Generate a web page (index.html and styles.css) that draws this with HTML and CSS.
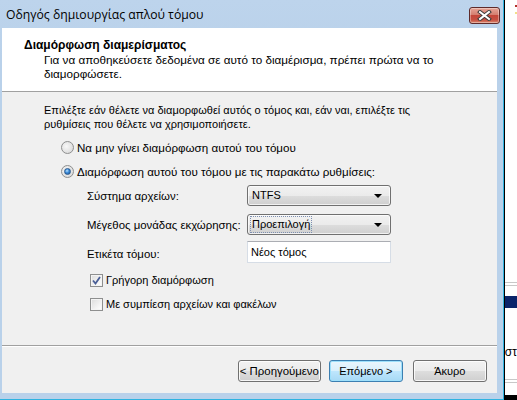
FILE: index.html
```html
<!DOCTYPE html>
<html lang="el">
<head>
<meta charset="utf-8">
<title>Οδηγός δημιουργίας απλού τόμου</title>
<link rel="stylesheet" href="styles.css">
</head>
<body>
<div class="screen">
  <div class="window">
    <div class="titlebar">
      <span class="title">Οδηγός δημιουργίας απλού τόμου</span>
      <button class="close" aria-label="Κλείσιμο">
        <svg width="15" height="11" viewBox="0 0 15 11">
          <path d="M3 2 L12 9 M12 2 L3 9" stroke="#3b3b3b" stroke-width="4" stroke-linecap="square" fill="none"/>
          <path d="M3 2 L12 9 M12 2 L3 9" stroke="#ffffff" stroke-width="2" stroke-linecap="square" fill="none"/>
        </svg>
      </button>
    </div>
    <div class="client">
      <div class="header">
        <div class="h-title">Διαμόρφωση διαμερίσματος</div>
        <div class="h-sub">Για να αποθηκεύσετε δεδομένα σε αυτό το διαμέρισμα, πρέπει πρώτα να το διαμορφώσετε.</div>
      </div>
      <div class="body">
        <p class="intro">Επιλέξτε εάν θέλετε να διαμορφωθεί αυτός ο τόμος και, εάν ναι, επιλέξτε τις ρυθμίσεις που θέλετε να χρησιμοποιήσετε.</p>
        <div class="opt opt-first"><span class="radio"></span><span>Να μην γίνει διαμόρφωση αυτού του τόμου</span></div>
        <div class="opt opt-second"><span class="radio checked"><span class="dot"></span></span><span>Διαμόρφωση αυτού του τόμου με τις παρακάτω ρυθμίσεις:</span></div>
        <div class="settings">
          <label class="lbl">Σύστημα αρχείων:</label>
          <div class="combo"><span class="combo-text">NTFS</span><span class="arrow"></span></div>
          <label class="lbl">Μέγεθος μονάδας εκχώρησης:</label>
          <div class="combo"><span class="combo-text focus">Προεπιλογή</span><span class="arrow"></span></div>
          <label class="lbl">Ετικέτα τόμου:</label>
          <div class="textbox">Νέος τόμος</div>
        </div>
        <div class="chk chk-first"><span class="box"><svg width="9" height="9" viewBox="0 0 9 9"><path d="M1 4.5 L3.5 7.5 L8 1" stroke="#4a5f97" stroke-width="1.8" fill="none"/></svg></span><span>Γρήγορη διαμόρφωση</span></div>
        <div class="chk chk-second"><span class="box"></span><span>Με συμπίεση αρχείων και φακέλων</span></div>
      </div>
      <div class="footer">
        <button class="btn btn-prev">&lt; Προηγούμενο</button>
        <button class="btn btn-next">Επόμενο &gt;</button>
        <button class="btn btn-cancel">Άκυρο</button>
      </div>
    </div>
  </div>
  <div class="edge"></div>
  <div class="behind">
    <div class="b-top"><span class="b-red"></span><span class="b-yellow"></span></div>
    <div class="b-lines"></div>
    <div class="b-navy"></div>
    <div class="b-text">στ</div>
    <div class="b-lines b-lines-low"></div>
    <div class="b-black"></div>
  </div>
</div>
</body>
</html>
```

FILE: styles.css
```css
* { box-sizing: border-box; }
html, body { margin: 0; padding: 0; }
body {
  width: 517px;
  height: 400px;
  overflow: hidden;
  background: #ffffff;
  font-family: "Liberation Sans", Arial, sans-serif;
  font-size: 11px;
  color: #000;
}
.screen { display: flex; width: 517px; height: 400px; }

.window {
  width: 506px;
  height: 400px;
  display: flex;
  flex-direction: column;
  background: linear-gradient(#bdd4ec, #b9d1ea 60px, #b9d1ea);
  padding: 0 6px 6px 2px;
  border-right: 1px solid #2fb3e0;
  border-bottom: 1px solid #2fb3e0;
}
.titlebar {
  height: 28px;
  flex: none;
  display: flex;
  align-items: flex-start;
  justify-content: space-between;
}
.title {
  font-family: "Open Sans", "Noto Sans", sans-serif;
  font-size: 12.2px;
  color: #000;
  margin: 7px 0 0 4px;
  line-height: 16px;
}
.close {
  width: 31px;
  height: 17px;
  margin: 7px -3px 0 0;
  padding: 0;
  border: 1px solid #5e2b2b;
  border-radius: 3px;
  background: linear-gradient(#e6a597 0%, #d47f70 45%, #c4473a 50%, #c65142 80%, #dc8a70 100%);
  display: flex;
  align-items: center;
  justify-content: center;
  box-shadow: inset 0 0 0 1px rgba(255,255,255,0.35);
}

.client {
  flex: 1;
  display: flex;
  flex-direction: column;
  background: #f0f0f0;
}
.header {
  height: 64px;
  flex: none;
  background: #ffffff;
  border-bottom: 1px solid #a0a0a0;
  padding: 9px 20px 0 22px;
}
.h-title {
  font-weight: bold;
  font-size: 12px;
  line-height: 16px;
}
.h-sub {
  margin-left: 20px;
  font-size: 11.7px;
  line-height: 14px;
  width: 400px;
}

.body {
  flex: 1;
  padding: 11px 0 0 42px;
  border-bottom: 1px solid #a0a0a0;
  box-shadow: 0 1px 0 #ffffff;
}
.intro {
  margin: 0;
  line-height: 14px;
  width: 380px;
}
.opt {
  display: flex;
  align-items: center;
  height: 16px;
  margin-left: 17px;
  gap: 3px;
  font-size: 11.6px;
}
.opt-first { margin-top: 8px; }
.opt-second { margin-top: 8px; }
.radio {
  width: 13px;
  height: 13px;
  border-radius: 50%;
  border: 1px solid #8e8f8f;
  background: radial-gradient(circle at 40% 40%, #f8f8f8 0%, #e2e2e2 60%, #d0d0d0 100%);
  display: flex;
  align-items: center;
  justify-content: center;
  flex: none;
}
.dot {
  width: 7px;
  height: 7px;
  border-radius: 50%;
  background: radial-gradient(circle at 40% 35%, #b9e2ff 0%, #3a8ad8 45%, #1b4f8f 100%);
  border: 1px solid #2a5a8f;
}

.settings {
  display: grid;
  grid-template-columns: 160px 144px;
  grid-template-rows: 21px 21px 22px;
  row-gap: 8px;
  margin: 6px 0 0 43px;
  align-items: center;
}
.lbl { font-size: 11.4px; }
.combo {
  height: 21px;
  border: 1px solid #707070;
  border-radius: 3px;
  background: linear-gradient(#f2f2f2 0%, #ebebeb 50%, #dddddd 51%, #cfcfcf 100%);
  box-shadow: inset 0 0 0 1px rgba(255,255,255,0.7);
  display: flex;
  align-items: center;
  justify-content: space-between;
  padding: 0 8px 0 3px;
}
.combo-text { color: #000; line-height: 13px; padding: 1px 1px; }
.combo-text.focus { outline: 1px dotted #7d8fb0; outline-offset: 0; }
.arrow {
  width: 0;
  height: 0;
  border-left: 4px solid transparent;
  border-right: 4px solid transparent;
  border-top: 4px solid #000;
}
.textbox {
  height: 22px;
  margin-top: -5px;
  background: #fff;
  border: 1px solid #d6dde6;
  border-top-color: #abadb3;
  display: flex;
  align-items: center;
  padding-left: 3px;
}

.chk {
  display: flex;
  align-items: center;
  height: 16px;
  margin-left: 46px;
  gap: 3px;
}
.chk-first { margin-top: 7px; }
.chk-second { margin-top: 8px; }
.box {
  width: 13px;
  height: 13px;
  border: 1px solid #8e8f8f;
  background: linear-gradient(135deg, #dcdcdc 0%, #f6f6f6 70%, #ffffff 100%);
  box-shadow: inset 0 0 0 1px #f4f4f4;
  display: flex;
  align-items: center;
  justify-content: center;
  flex: none;
}

.footer {
  height: 47px;
  flex: none;
  display: flex;
  justify-content: flex-end;
  align-items: flex-start;
  padding: 14px 10px 0 0;
}
.btn {
  height: 22px;
  font-family: "Liberation Sans", Arial, sans-serif;
  font-size: 11px;
  color: #000;
  border: 1px solid #707070;
  border-radius: 3px;
  background: linear-gradient(#f2f2f2 0%, #ebebeb 50%, #dddddd 51%, #cfcfcf 100%);
  box-shadow: inset 0 0 0 1px rgba(255,255,255,0.8);
  padding: 0;
}
.btn-prev { width: 83px; font-size: 11.4px; }
.btn-next {
  width: 74px;
  margin-left: 8px;
  border-color: #3c7fb1;
  background: linear-gradient(#eaf6fd 0%, #d9f0fc 50%, #bee6fd 51%, #a7d9f5 100%);
  box-shadow: inset 0 0 0 1px #9ee0fb;
}
.btn-cancel { width: 74px; margin-left: 10px; }

.edge { width: 1px; height: 400px; background: #000; flex: none; }
.behind {
  flex: 1;
  height: 400px;
  display: flex;
  flex-direction: column;
  background: #fff;
}
.b-top { height: 20px; display: flex; flex-direction: column; align-items: flex-end; padding-top: 5px; gap: 5px; }
.b-red { width: 2px; height: 2px; background: #b0322a; }
.b-yellow { width: 2px; height: 2px; background: #f2e08a; }
.b-lines {
  margin-top: 262px;
  height: 4px;
  border-top: 1px solid #c8c8c8;
  border-bottom: 1px solid #c8c8c8;
}
.b-navy { margin-top: 10px; height: 12px; background: #0a246a; }
.b-text { margin-top: 37px; font-size: 12px; line-height: 14px; }
.b-lines-low { margin-top: 20px; }
.b-black { margin-top: auto; height: 5px; background: #000; }
```
